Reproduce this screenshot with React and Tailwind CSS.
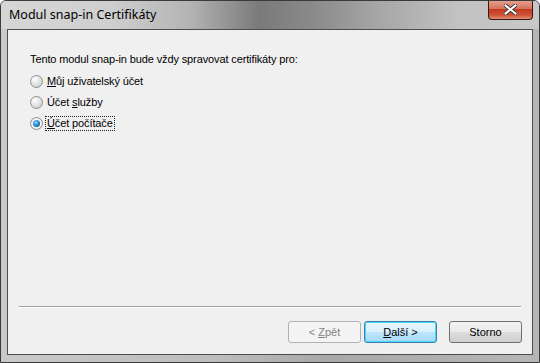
/**
 * Certificates snap-in dialog (Windows 7 style)
 */

import React from 'react';

const bodyFont = { fontFamily: '"Liberation Sans", Arial, sans-serif' };

/**
 * Radio option with an access-key underline
 */
const Radio = ({ checked, focused, children }) => (
  <div className="flex items-center h-[21px]">
    <span
      className={`w-[13px] h-[13px] rounded-full border border-[#8e8f8f] flex items-center justify-center ${
        checked
          ? 'bg-[radial-gradient(circle_at_50%_50%,#ffffff_0%,#e6e6e6_100%)]'
          : 'bg-[radial-gradient(circle_at_35%_30%,#ffffff_0%,#dcdcdc_60%,#c4c4c4_100%)]'
      }`}
    >
      {checked && (
        <span className="w-[7px] h-[7px] rounded-full bg-[radial-gradient(circle_at_40%_35%,#8fd3ff_0%,#1e7fc6_55%,#0b4f8a_100%)]" />
      )}
    </span>
    <span
      className={`ml-[3px] px-[1px] leading-[13px] ${
        focused ? 'outline outline-1 outline-dotted outline-[#222]' : ''
      }`}
    >
      {children}
    </span>
  </div>
);

/**
 * Dialog push button
 */
const Button = ({ variant = 'normal', children }) => {
  const styles = {
    normal:
      'border-[#707070] bg-[linear-gradient(#f2f2f2_0%,#ebebeb_50%,#dddddd_50%,#cfcfcf_100%)] text-black',
    primary:
      'border-[#3c7fb1] bg-[linear-gradient(#eaf6fd_0%,#d9f0fc_50%,#bee6fd_50%,#a7d9f5_100%)] text-black shadow-[inset_0_0_0_1px_#48d8fb]',
    disabled: 'border-[#adb2b5] bg-[#f4f4f4] text-[#838383]',
  };
  return (
    <div
      className={`w-[73px] h-[22px] rounded-[3px] border flex items-center justify-center text-[11px] ${styles[variant]}`}
    >
      {children}
    </div>
  );
};

const App = () => {
  return (
    <div
      className="w-[540px] h-[363px] flex flex-col border border-[#3a3a3a] rounded-t-[6px] overflow-hidden bg-[linear-gradient(90deg,#c9c9c9_0%,#bdbdbd_40%,#a9a9a9_60%,#b6b6b6_100%)]"
    >
      {/* Title bar */}
      <div className="relative h-[28px] flex items-center pl-[8px] bg-[linear-gradient(90deg,#d6d6d6_0%,#cfcfcf_20%,#b4b4b4_35%,#7a7a7a_48%,#8a8a8a_58%,#a6a6a6_70%,#c2c2c2_85%,#c8c8c8_100%)]">
        <span
          className="text-[12.5px] text-black"
          style={{ fontFamily: '"Noto Sans", "Open Sans", sans-serif' }}
        >
          Modul snap-in Certifikáty
        </span>

        {/* Close button */}
        <div className="absolute right-[6px] top-[-1px] w-[45px] h-[20px] rounded-b-[4px] border border-[#3b1510] border-t-0 bg-[linear-gradient(#e8a493_0%,#d6735d_45%,#c5391e_50%,#cf5337_80%,#e1917b_100%)] flex items-center justify-center">
          <svg width="13" height="11" viewBox="0 0 13 11">
            <path
              d="M1.5 1.5 L11.5 9.5 M11.5 1.5 L1.5 9.5"
              stroke="#3a3a3a"
              strokeWidth="4"
              strokeLinecap="square"
            />
            <path
              d="M1.5 1.5 L11.5 9.5 M11.5 1.5 L1.5 9.5"
              stroke="#ffffff"
              strokeWidth="2"
              strokeLinecap="square"
            />
          </svg>
        </div>
      </div>

      {/* Client area */}
      <div className="flex-1 mx-[6px] mb-[7px] border border-[#4d4d4d] bg-[#f0f0f0] flex flex-col" style={bodyFont}>
        <div className="flex-1 pl-[22px] pt-[23px] text-[11px] text-black tracking-[-0.12px]">
          <div className="leading-[13px]">Tento modul snap-in bude vždy spravovat certifikáty pro:</div>
          <div className="mt-[5px] flex flex-col">
            <Radio>
              <u>M</u>ůj uživatelský účet
            </Radio>
            <Radio>
              Účet <u>s</u>lužby
            </Radio>
            <Radio checked focused>
              <u>Ú</u>čet počítače
            </Radio>
          </div>
        </div>

        {/* Separator */}
        <div className="mx-[11px] border-t border-[#a0a0a0] border-b border-b-white" />

        {/* Buttons */}
        <div className="flex justify-end items-center pr-[10px] pt-[13px] pb-[11px]">
          <Button variant="disabled">
            &lt; <u className="ml-[3px]">Z</u>pět
          </Button>
          <div className="ml-[3px]">
            <Button variant="primary">
              <u>D</u>alší &gt;
            </Button>
          </div>
          <div className="ml-[12px]">
            <Button>Storno</Button>
          </div>
        </div>
      </div>
    </div>
  );
};

export default App;
